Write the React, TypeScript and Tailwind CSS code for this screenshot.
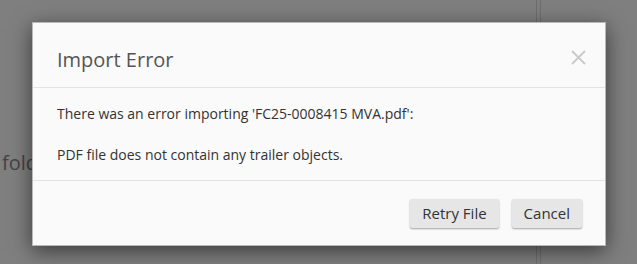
import React from "react";

export default function App() {
  return (
    <div
      className="relative w-[637px] h-[264px] overflow-hidden bg-[#7f7f7f]"
      style={{ fontFamily: "'Open Sans', 'Noto Sans', sans-serif" }}
    >
      {/* background content */}
      <div className="absolute left-[536px] top-0 h-full w-[5px] border-l border-r border-[#6e6e6e]" />
      <div className="absolute left-[2px] top-[148px] text-[20px] text-[#444]">folders</div>

      {/* modal */}
      <div className="absolute left-[32px] top-[22px] w-[574px] bg-[#fafafa] shadow-[0_5px_20px_rgba(0,0,0,0.55)] border border-[#555]/40">
        <div className="relative flex items-center h-[65px] px-[24px] pt-[9px] border-b border-[#e3e3e3]">
          <div className="text-[20px] leading-[26px] font-medium text-[#555]">Import Error</div>
          <svg className="absolute left-[538px] top-[27px]" width="15" height="15" viewBox="0 0 15 15">
            <path d="M1 1 L14 14 M14 1 L1 14" stroke="#c9c9c9" strokeWidth="1.8" fill="none" />
          </svg>
        </div>
        <div className="px-[24px] pt-4 pb-[15px] text-[14px] leading-[20px] text-[#333] flex flex-col gap-[21px]">
          <p>There was an error importing 'FC25-0008415 MVA.pdf':</p>
          <p>PDF file does not contain any trailer objects.</p>
        </div>
        <div className="flex justify-end gap-[13px] pt-[18px] pb-[17px] pr-[23px] border-t border-[#e3e3e3]">
          <button className="h-[29px] px-[12px] rounded-[2px] bg-[#e6e6e6] text-[15px] font-medium text-[#333] shadow-[0_1px_2px_rgba(0,0,0,0.35)]">
            Retry File
          </button>
          <button className="h-[29px] px-[12px] rounded-[2px] bg-[#e6e6e6] text-[15px] font-medium text-[#333] shadow-[0_1px_2px_rgba(0,0,0,0.35)]">
            Cancel
          </button>
        </div>
      </div>
    </div>
  );
}
